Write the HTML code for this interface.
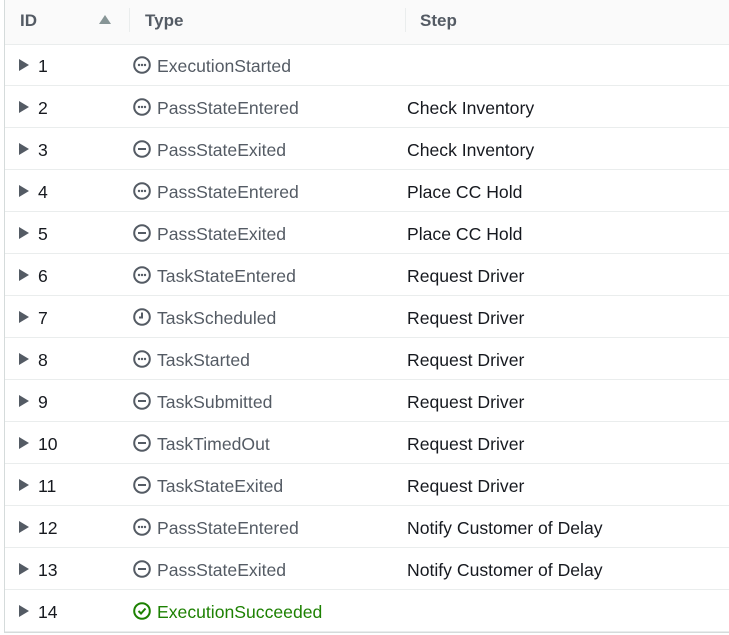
<!DOCTYPE html>
<html><head><meta charset="utf-8"><style>
body{margin:0;width:729px;height:635px;background:#fff;font-family:"Liberation Sans",sans-serif;overflow:hidden;position:relative}
.frame{position:absolute;left:4px;top:0;width:730px;height:632px;border-left:1px solid #d5dbdb;border-bottom:1px solid #d5dbdb}
.hdr{position:absolute;left:5px;top:0;width:724px;height:44px;background:#fafafa;border-bottom:1px solid #eaeded}
.h{position:absolute;top:11px;font-weight:bold;font-size:17px;color:#545b64}
.sep{position:absolute;top:8px;width:1px;height:24px;background:#eaeded}
.row{position:absolute;left:5px;width:724px;height:41px;border-bottom:1px solid #eaeded}
.row span{position:absolute;top:12px;font-size:17.6px}
.id{left:33px;color:#16191f}
.ty{left:152px;color:#545b64}
.st{left:402px;color:#16191f}
.arr{position:absolute;left:14px;top:15px;width:0;height:0;border-left:10px solid #545b64;border-top:6px solid transparent;border-bottom:6px solid transparent}
svg{position:absolute;left:128px;top:12px}
</style></head><body>
<div class="frame"></div>
<div class="hdr">
<div class="h" style="left:15px">ID</div>
<div style="position:absolute;left:94px;top:15px;border-bottom:9px solid #879596;border-left:6px solid transparent;border-right:6px solid transparent"></div>
<div class="sep" style="left:124px"></div>
<div class="h" style="left:140px">Type</div>
<div class="sep" style="left:400px"></div>
<div class="h" style="left:415px">Step</div>
</div>
<div id="rows"></div>
<script>
var D=[["1","d","ExecutionStarted",""],["2","d","PassStateEntered","Check Inventory"],["3","m","PassStateExited","Check Inventory"],["4","d","PassStateEntered","Place CC Hold"],["5","m","PassStateExited","Place CC Hold"],["6","d","TaskStateEntered","Request Driver"],["7","c","TaskScheduled","Request Driver"],["8","d","TaskStarted","Request Driver"],["9","m","TaskSubmitted","Request Driver"],["10","m","TaskTimedOut","Request Driver"],["11","m","TaskStateExited","Request Driver"],["12","d","PassStateEntered","Notify Customer of Delay"],["13","m","PassStateExited","Notify Customer of Delay"],["14","s","ExecutionSucceeded",""]];
var h="";
D.forEach(function(r,i){
var c=r[1]=="s"?"#1d8102":"#545b64";
var inner=r[1]=="d"?'<circle cx="6" cy="9" r="1.2" fill="'+c+'"/><circle cx="9" cy="9" r="1.2" fill="'+c+'"/><circle cx="12" cy="9" r="1.2" fill="'+c+'"/>':
r[1]=="m"?'<line x1="5" y1="9" x2="13" y2="9" stroke="'+c+'" stroke-width="2"/>':
r[1]=="c"?'<path d="M9 4.5V9.5H6" fill="none" stroke="'+c+'" stroke-width="2"/>':
'<path d="M5.5 9l2.5 2.5 4.5-5" fill="none" stroke="'+c+'" stroke-width="2"/>';
h+='<div class="row" style="top:'+(44+i*42)+'px"><div class="arr"></div><span class="id">'+r[0]+'</span><svg width="18" height="18" viewBox="0 0 18 18"><circle cx="9" cy="9" r="7.8" fill="none" stroke="'+c+'" stroke-width="2"/>'+inner+'</svg><span class="ty" style="color:'+c+'">'+r[2]+'</span><span class="st">'+r[3]+'</span></div>';
});
document.getElementById("rows").innerHTML=h;
</script>
</body></html>
